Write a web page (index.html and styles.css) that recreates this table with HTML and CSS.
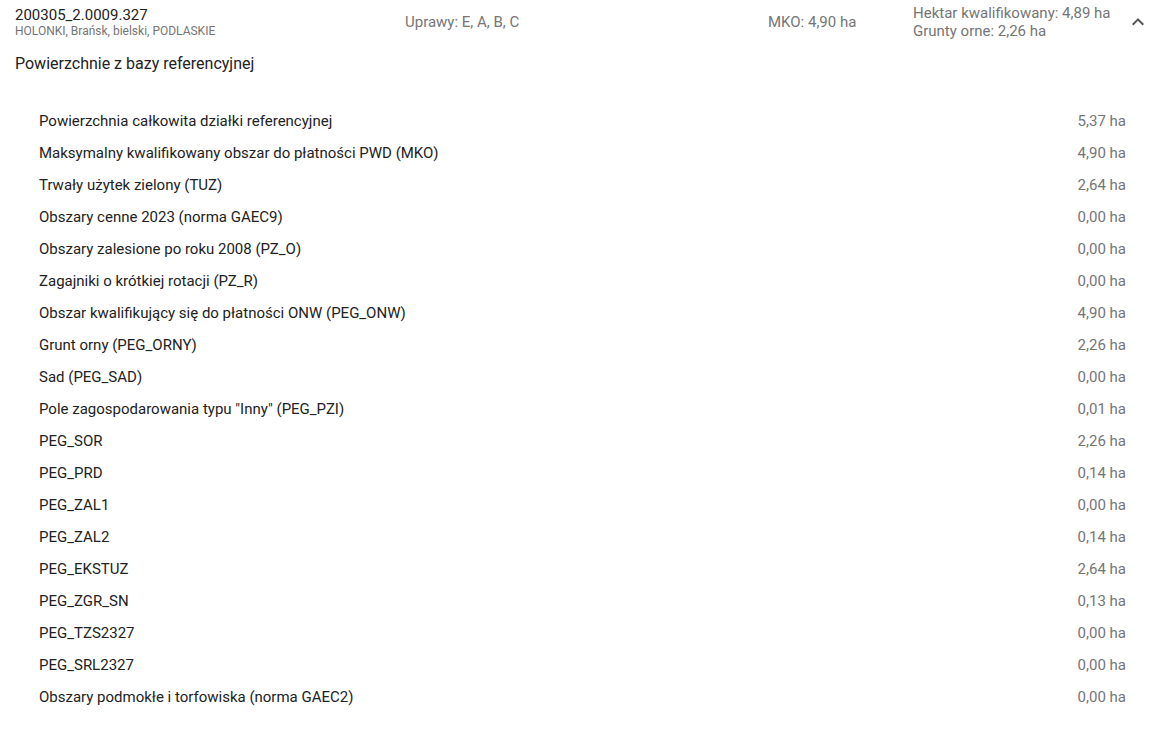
FILE: index.html
```html
<!DOCTYPE html>
<html lang="pl">
<head>
  <meta charset="UTF-8" />
  <title>Działka</title>
  <link rel="stylesheet" href="styles.css">
</head>
<body>
  <div class="panel">
    <div class="panel-header">
      <div class="parcel">
        <div class="parcel-id">200305_2.0009.327</div>
        <div class="parcel-place">HOLONKI, Brańsk, bielski, PODLASKIE</div>
      </div>
      <div class="crops">Uprawy: E, A, B, C</div>
      <div class="mko">MKO: 4,90 ha</div>
      <div class="totals">
        <div>Hektar kwalifikowany: 4,89 ha</div>
        <div>Grunty orne: 2,26 ha</div>
      </div>
      <div class="toggle">
        <svg width="24" height="24" viewBox="0 0 24 24"><path d="M7.41 15.41 12 10.83l4.59 4.58L18 14l-6-6-6 6z" fill="#555"/></svg>
      </div>
    </div>

    <h3 class="section-title">Powierzchnie z bazy referencyjnej</h3>

    <div class="area-list">
      <div class="area-row"><span>Powierzchnia całkowita działki referencyjnej</span><span class="val">5,37 ha</span></div>
      <div class="area-row"><span>Maksymalny kwalifikowany obszar do płatności PWD (MKO)</span><span class="val">4,90 ha</span></div>
      <div class="area-row"><span>Trwały użytek zielony (TUZ)</span><span class="val">2,64 ha</span></div>
      <div class="area-row"><span>Obszary cenne 2023 (norma GAEC9)</span><span class="val">0,00 ha</span></div>
      <div class="area-row"><span>Obszary zalesione po roku 2008 (PZ_O)</span><span class="val">0,00 ha</span></div>
      <div class="area-row"><span>Zagajniki o krótkiej rotacji (PZ_R)</span><span class="val">0,00 ha</span></div>
      <div class="area-row"><span>Obszar kwalifikujący się do płatności ONW (PEG_ONW)</span><span class="val">4,90 ha</span></div>
      <div class="area-row"><span>Grunt orny (PEG_ORNY)</span><span class="val">2,26 ha</span></div>
      <div class="area-row"><span>Sad (PEG_SAD)</span><span class="val">0,00 ha</span></div>
      <div class="area-row"><span>Pole zagospodarowania typu "Inny" (PEG_PZI)</span><span class="val">0,01 ha</span></div>
      <div class="area-row"><span>PEG_SOR</span><span class="val">2,26 ha</span></div>
      <div class="area-row"><span>PEG_PRD</span><span class="val">0,14 ha</span></div>
      <div class="area-row"><span>PEG_ZAL1</span><span class="val">0,00 ha</span></div>
      <div class="area-row"><span>PEG_ZAL2</span><span class="val">0,14 ha</span></div>
      <div class="area-row"><span>PEG_EKSTUZ</span><span class="val">2,64 ha</span></div>
      <div class="area-row"><span>PEG_ZGR_SN</span><span class="val">0,13 ha</span></div>
      <div class="area-row"><span>PEG_TZS2327</span><span class="val">0,00 ha</span></div>
      <div class="area-row"><span>PEG_SRL2327</span><span class="val">0,00 ha</span></div>
      <div class="area-row"><span>Obszary podmokłe i torfowiska (norma GAEC2)</span><span class="val">0,00 ha</span></div>
    </div>
  </div>
</body>
</html>
```

FILE: styles.css
```css
body {
  margin: 0;
  padding: 0;
  font-family: Roboto, "Noto Sans", sans-serif;
  background: #fff;
  color: #222;
}

.panel {
  padding: 0 0 0 15px;
}

.panel-header {
  display: grid;
  grid-template-columns: 390px 363px 145px 1fr 40px;
  align-items: center;
  height: 44px;
}

.parcel-id {
  font-size: 15px;
  line-height: 18px;
  color: #222;
}

.parcel-place {
  font-size: 12px;
  line-height: 15px;
  color: #757575;
}

.crops,
.mko,
.totals {
  font-size: 15px;
  line-height: 18px;
  color: #757575;
}

.toggle {
  display: flex;
  align-items: center;
  justify-content: center;
  height: 24px;
  margin-right: 4px;
}

.section-title {
  margin: 0;
  padding-top: 8px;
  font-size: 16px;
  font-weight: 400;
  line-height: 24px;
  color: #222;
}

.area-list {
  padding: 29px 34px 0 24px;
}

.area-row {
  display: flex;
  justify-content: space-between;
  align-items: center;
  height: 32px;
  font-size: 15px;
}

.area-row .val {
  color: #757575;
}
```
